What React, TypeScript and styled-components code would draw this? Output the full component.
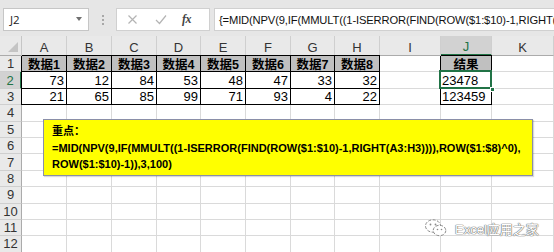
import React from "react";
import styled, { createGlobalStyle, css } from "styled-components";

const GlobalStyle = createGlobalStyle`
  html, body { margin: 0; padding: 0; background: #ffffff; }
  body { font-family: "Liberation Sans", Arial, sans-serif; }
  #root { width: 554px; height: 252px; overflow: hidden; }
`;

const GREEN = "#217346";
const GRID = "#dadada";
const HEAD_BG = "#e9e9e9";

const COLS = ["A", "B", "C", "D", "E", "F", "G", "H", "I", "J", "K"];
const WIDTHS = [45, 45, 45, 44, 45, 45, 44, 45, 61, 51];

const Window = styled.div`
  width: 554px;
  height: 252px;
  display: flex;
  flex-direction: column;
  background: #ffffff;
  overflow: hidden;
`;

/* ---------- formula bar ---------- */

const Toolbar = styled.div`
  height: 36px;
  flex: none;
  box-sizing: border-box;
  background: #e6e6e6;
  display: flex;
  align-items: flex-start;
  padding: 8px 0 0 3px;
`;

const NameBox = styled.div`
  width: 86px;
  height: 23px;
  box-sizing: border-box;
  background: #ffffff;
  border: 1px solid #c6c6c6;
  display: flex;
  align-items: center;
  justify-content: space-between;
  padding: 0 6px 0 6px;
  font-family: "Open Sans", "Liberation Sans", sans-serif;
  font-size: 11.5px;
  color: #222;
`;

const Caret = styled.span`
  width: 0;
  height: 0;
  border-left: 3.5px solid transparent;
  border-right: 3.5px solid transparent;
  border-top: 4px solid #707070;
  margin-top: -2px;
`;

const Grip = styled.div`
  width: 27px;
  height: 23px;
  display: flex;
  flex-direction: column;
  align-items: center;
  justify-content: center;
  gap: 2px;
  span {
    width: 2px;
    height: 2px;
    background: #a8a8a8;
  }
`;

const ActionBox = styled.div`
  width: 94px;
  height: 23px;
  box-sizing: border-box;
  background: #ffffff;
  border: 1px solid #d0d0d0;
  display: flex;
  align-items: center;
  padding-left: 10px;
  gap: 17px;
`;

const Fx = styled.span`
  font-family: "Liberation Serif", "Times New Roman", serif;
  font-style: italic;
  font-weight: bold;
  font-size: 12px;
  color: #444;
  letter-spacing: -0.5px;
  margin-left: -2px;
`;

const FormulaInput = styled.div`
  flex: 1;
  margin-left: 4px;
  height: 23px;
  box-sizing: border-box;
  background: #ffffff;
  border: 1px solid #d0d0d0;
  border-right: none;
  display: flex;
  align-items: center;
  padding-left: 4px;
  white-space: nowrap;
  overflow: hidden;
  font-family: "Liberation Sans", Arial, sans-serif;
  font-size: 11.2px;
  letter-spacing: -0.15px;
  color: #111;
`;

/* ---------- sheet ---------- */

const Sheet = styled.div`
  position: relative;
  flex: 1;
  display: grid;
  grid-template-columns: 22px ${WIDTHS.map((w) => `${w}px`).join(" ")} 1fr;
  grid-template-rows: 20px repeat(12, 16.4px);
`;

const Corner = styled.div`
  position: relative;
  background: ${HEAD_BG};
  border-right: 1px solid #c6c6c6;
  border-bottom: 1px solid #ababab;
  box-sizing: border-box;
  &::after {
    content: "";
    position: absolute;
    right: 3px;
    bottom: 3px;
    border-left: 10px solid transparent;
    border-bottom: 10px solid #c4c4c4;
  }
`;

const ColHead = styled.div<{ $active?: boolean }>`
  box-sizing: border-box;
  background: ${(p) => (p.$active ? "#d2d2d2" : HEAD_BG)};
  border-right: 1px solid #cfcfcf;
  border-bottom: ${(p) => (p.$active ? `2px solid ${GREEN}` : "1px solid #ababab")};
  display: flex;
  align-items: center;
  justify-content: center;
  padding-top: 3px;
  font-family: "Liberation Sans", Arial, sans-serif;
  font-size: 13px;
  color: ${(p) => (p.$active ? GREEN : "#333")};
`;

const RowHead = styled.div<{ $active?: boolean }>`
  box-sizing: border-box;
  background: ${(p) => (p.$active ? "#d2d2d2" : HEAD_BG)};
  border-right: ${(p) => (p.$active ? `2px solid ${GREEN}` : "1px solid #ababab")};
  border-bottom: 1px solid #cfcfcf;
  display: flex;
  align-items: center;
  justify-content: center;
  font-family: "Liberation Sans", Arial, sans-serif;
  font-size: 13px;
  color: ${(p) => (p.$active ? GREEN : "#333")};
`;

type CellKind = "plain" | "title" | "num" | "text";

const Cell = styled.div<{
  $kind: CellKind;
  $boxed?: boolean;
  $edgeLeft?: boolean;
  $edgeTop?: boolean;
  $selected?: boolean;
}>`
  position: relative;
  box-sizing: border-box;
  border-right: 1px solid ${(p) => (p.$boxed ? "#000" : GRID)};
  border-bottom: 1px solid ${(p) => (p.$boxed ? "#000" : GRID)};
  box-shadow: ${(p) =>
    [p.$edgeLeft ? "-1px 0 0 #000" : "", p.$edgeTop ? "0 -1px 0 #000" : ""]
      .filter(Boolean)
      .join(", ") || "none"};
  display: flex;
  align-items: center;
  overflow: visible;
  white-space: nowrap;
  font-family: "Liberation Sans", Arial, sans-serif;
  font-size: 13px;
  color: #000;
  ${(p) =>
    p.$kind === "title" &&
    css`
      background: #c0c0c0;
      justify-content: center;
      font-family: "Liberation Sans", "Noto Sans CJK SC", sans-serif;
      font-weight: bold;
      font-size: 12.5px;
    `}
  ${(p) =>
    p.$kind === "num" &&
    css`
      justify-content: flex-end;
      padding-right: 2px;
      padding-top: 1px;
    `}
  ${(p) =>
    p.$kind === "text" &&
    css`
      justify-content: flex-start;
      padding-left: 1px;
      padding-top: 1px;
    `}
  ${(p) =>
    p.$selected &&
    css`
      z-index: 2;
      &::before {
        content: "";
        position: absolute;
        left: -2px;
        top: -2px;
        right: -1px;
        bottom: -1px;
        border: 2px solid ${GREEN};
        pointer-events: none;
      }
      &::after {
        content: "";
        position: absolute;
        right: -4px;
        bottom: -4px;
        width: 5px;
        height: 5px;
        background: ${GREEN};
        border: 1px solid #ffffff;
        box-sizing: border-box;
      }
    `}
`;

/* ---------- floating text box ---------- */

const NoteBox = styled.div`
  position: absolute;
  left: 43px;
  top: 83px;
  width: 490px;
  height: 57px;
  box-sizing: border-box;
  background: #ffff00;
  border: 1px solid #8a8fa8;
  box-shadow: 1px 1px 1px rgba(0, 0, 0, 0.15);
  padding: 3px 0 0 8px;
  font-family: "Liberation Sans", Arial, "Noto Sans CJK SC", sans-serif;
  font-weight: bold;
  font-size: 11px;
  line-height: 16.5px;
  color: #000;
  z-index: 3;
`;

const NoteLine = styled.div`
  white-space: nowrap;
`;

/* ---------- watermark ---------- */

const Watermark = styled.div`
  position: absolute;
  left: 424px;
  top: 182px;
  display: flex;
  align-items: center;
  gap: 6px;
  z-index: 4;
  font-family: "Liberation Sans", "Noto Sans CJK SC", sans-serif;
  font-size: 13px;
  color: #ffffff;
  text-shadow: 0 0 1px #6a6a6a, 0 0 1px #6a6a6a, 0 0 1px #6a6a6a;
`;

function WeChatMark() {
  return (
    <svg width="25" height="20" viewBox="0 0 25 20" fill="none">
      <g stroke="#8a8a8a" strokeWidth="1" strokeDasharray="3 1.5">
        <ellipse cx="9" cy="8" rx="7.5" ry="6.2" fill="#ffffff" />
        <ellipse cx="15.5" cy="12.5" rx="6.3" ry="5.2" fill="#ffffff" />
      </g>
      <circle cx="6.5" cy="6.5" r="0.9" fill="#8a8a8a" />
      <circle cx="11.5" cy="6.5" r="0.9" fill="#8a8a8a" />
      <circle cx="13.5" cy="11.5" r="0.8" fill="#8a8a8a" />
      <circle cx="17.5" cy="11.5" r="0.8" fill="#8a8a8a" />
    </svg>
  );
}

const ROW2 = [73, 12, 84, 53, 48, 47, 33, 32];
const ROW3 = [21, 65, 85, 99, 71, 93, 4, 22];

export default function App() {
  const rows: React.ReactNode[] = [];

  for (let r = 1; r <= 12; r++) {
    rows.push(
      <RowHead key={`rh${r}`} $active={r === 2}>
        {r}
      </RowHead>
    );
    COLS.forEach((c, ci) => {
      const key = `${c}${r}`;
      const inTable = ci < 8 && r <= 3;
      const inResult = c === "J" && r <= 3;
      if (inTable) {
        if (r === 1) {
          rows.push(
            <Cell key={key} $kind="title" $boxed $edgeLeft={ci === 0} $edgeTop>
              数据{ci + 1}
            </Cell>
          );
        } else {
          const v = r === 2 ? ROW2[ci] : ROW3[ci];
          rows.push(
            <Cell key={key} $kind="num" $boxed $edgeLeft={ci === 0}>
              {v}
            </Cell>
          );
        }
      } else if (inResult) {
        if (r === 1) {
          rows.push(
            <Cell key={key} $kind="title" $boxed $edgeLeft $edgeTop>
              结果
            </Cell>
          );
        } else {
          rows.push(
            <Cell key={key} $kind="text" $boxed $edgeLeft $selected={r === 2}>
              {r === 2 ? "23478" : "123459"}
            </Cell>
          );
        }
      } else {
        rows.push(<Cell key={key} $kind="plain" />);
      }
    });
  }

  return (
    <>
      <GlobalStyle />
      <Window>
        <Toolbar>
          <NameBox>
            J2
            <Caret />
          </NameBox>
          <Grip>
            <span />
            <span />
            <span />
          </Grip>
          <ActionBox>
            <svg width="11" height="11" viewBox="0 0 11 11">
              <path d="M1.5 1.5 L9.5 9.5 M9.5 1.5 L1.5 9.5" stroke="#b4b4b4" strokeWidth="1.2" />
            </svg>
            <svg width="12" height="11" viewBox="0 0 12 11">
              <path d="M1 6 L4.5 9.5 L11 1.5" stroke="#b4b4b4" strokeWidth="1.2" fill="none" />
            </svg>
            <Fx>fx</Fx>
          </ActionBox>
          <FormulaInput>
            {"{=MID(NPV(9,IF(MMULT((1-ISERROR(FIND(ROW($1:$10)-1,RIGHT(A3:H3)))),ROW($1:$8)^0),ROW($1:$10)-1)),3,100)}"}
          </FormulaInput>
        </Toolbar>
        <Sheet>
          <Corner />
          {COLS.map((c) => (
            <ColHead key={c} $active={c === "J"}>
              {c}
            </ColHead>
          ))}
          {rows}
          <NoteBox>
            <NoteLine>重点：</NoteLine>
            <NoteLine>=MID(NPV(9,IF(MMULT((1-ISERROR(FIND(ROW($1:$10)-1,RIGHT(A3:H3)))),ROW($1:$8)^0),</NoteLine>
            <NoteLine>ROW($1:$10)-1)),3,100)</NoteLine>
          </NoteBox>
          <Watermark>
            <WeChatMark />
            <span>Excel应用之家</span>
          </Watermark>
        </Sheet>
      </Window>
    </>
  );
}
